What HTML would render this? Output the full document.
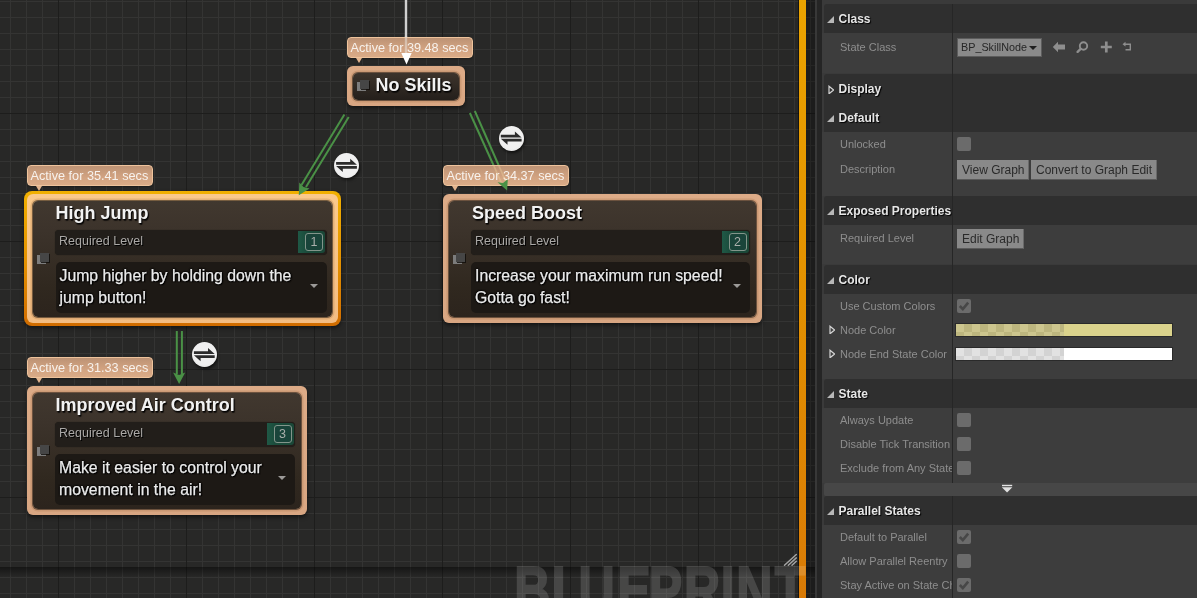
<!DOCTYPE html>
<html><head><meta charset="utf-8">
<style>
*{margin:0;padding:0;box-sizing:border-box}
html,body{width:1197px;height:598px;overflow:hidden;background:#3a3a3a;font-family:"Liberation Sans",sans-serif}
#graph{will-change:transform;position:absolute;left:0;top:0;width:815px;height:598px;background-color:#282827;
background-image:
linear-gradient(to right,#1d1d1c 0,#1d1d1c 1px,transparent 1px),
linear-gradient(to bottom,#1d1d1c 0,#1d1d1c 1px,transparent 1px),
linear-gradient(to right,#343433 0,#343433 1px,transparent 1px),
linear-gradient(to bottom,#343433 0,#343433 1px,transparent 1px);
background-size:128px 128px,128px 128px,16px 16px,16px 16px;
background-position:58px 0,0 113px,10px 0,0 1px;overflow:hidden}
.abs{position:absolute}
.bub{position:absolute;height:21px;border-radius:4px;background:linear-gradient(#bd9375,#d2a381 60%,#daab87);border:1px solid #eec39c;color:#f7f2ed;font-size:12.7px;line-height:20px;padding-left:2.5px;white-space:nowrap;box-shadow:0 1px 2px rgba(0,0,0,.35)}
.bub:after{content:"";position:absolute;left:7.5px;top:20px;border-left:3px solid transparent;border-right:3px solid transparent;border-top:5px solid #e2b48e}
.node{position:absolute;background:linear-gradient(#ddab87,#d8a682);border-radius:6px;box-shadow:0 2px 4px rgba(0,0,0,.55)}
.node .in{position:absolute;left:6px;top:6.5px;right:6px;bottom:6.5px;border-radius:5px;background:linear-gradient(#41382f 0,#3c332b 30px,#30281f 75%,#2c241d 100%);box-shadow:0 0 0 1px rgba(30,24,18,.55),0 0 0 2.5px rgba(150,100,60,.22)}
.title{position:absolute;color:#f2f2f2;font-weight:bold;font-size:18px;white-space:nowrap;text-shadow:1px 1px 1px rgba(0,0,0,.9),1px 2px 1px rgba(0,0,0,.6)}
.req{position:absolute;height:25px;border-radius:4px;background:#221e1a;box-shadow:0 0 1px rgba(0,0,0,.6)}
.req span{position:absolute;left:4px;top:4px;font-size:12.5px;color:#aaa8a6;text-shadow:1px 1px 0 #000}
.badge{position:absolute;right:1.5px;top:1.5px;width:27px;height:22px;background:linear-gradient(to right,#1f5946,#1b4c3c 30%,#1a4737);border-radius:0 3px 3px 0}
.badge i{position:absolute;left:7px;top:2px;width:18px;height:18px;border:1px solid #83958b;border-radius:3px;font-style:normal;color:#a9aeab;font-size:12.5px;text-align:center;line-height:16px;background:#19443a}
.desc{position:absolute;height:50.5px;border-radius:5px;background:#1d1915}
.desc p{position:absolute;left:4px;top:3.3px;color:#ececec;-webkit-text-stroke:0.25px #e8e8e8;font-size:15.8px;line-height:21.8px;text-shadow:0 0 2px #000,0 0 2px #000,0 0 1.5px #000,0 0 1px #000,1px 1px 1px #000}
.dd{position:absolute;width:0;height:0;border-left:4.5px solid transparent;border-right:4.5px solid transparent;border-top:4.5px solid #9c9a98}
.ico{position:absolute;width:13px;height:12px}
.ico:before{content:"";position:absolute;left:0;top:2px;width:9px;height:9px;background:#7c7c7c}
.ico:after{content:"";position:absolute;left:3px;top:0;width:9px;height:9px;background:#464646;box-shadow:1px 1px 0 rgba(15,12,10,.8)}
.tcirc{position:absolute;width:25px;height:25px;border-radius:50%;background:radial-gradient(circle at 50% 45%,#f0f0f0 60%,#dcdcdc 100%);box-shadow:1px 2px 3px rgba(0,0,0,.6)}
#panel{will-change:transform;position:absolute;left:815px;top:0;width:382px;height:598px;background:#3a3a3a}
#panel .strip1{position:absolute;left:0;top:0;width:2px;height:598px;background:#383838}
#panel .strip2{position:absolute;left:2px;top:0;width:5px;height:598px;background:#252525}
.hdr{position:absolute;left:9px;width:373px;background:#2f2f2f;border-radius:3px 0 0 3px}
.hdr b{position:absolute;left:14.5px;margin-top:1px;font-size:12px;color:#e6e6e6;text-shadow:1px 1px 1px #000;white-space:nowrap}
.tri{position:absolute;left:3px;width:0;height:0;border-left:7px solid transparent;border-bottom:7px solid #b8b8b8;margin-top:0}
.trc{position:absolute;left:4px;width:6px;height:9px}
.rows{position:absolute;left:7px;width:375px;background:#3d3d3d}
.lbl{position:absolute;left:25px;font-size:11px;color:#8e8e8e;white-space:nowrap;overflow:hidden}
.div{position:absolute;left:137px;width:1px;background:#262626}
.cb{position:absolute;left:142px;width:14px;height:14px;border-radius:2px;background:#6b6b6b}
.btn{position:absolute;height:20px;background:#898989;border-bottom:1px solid #5a5a5a;border-right:1px solid #6a6a6a;color:#2a2a2a;font-size:12px;line-height:21px;padding-left:5px;white-space:nowrap}

</style></head><body>
<div id="graph">
  <!-- shadow band -->
  <div class="abs" style="left:0;top:567px;width:815px;height:10px;background:linear-gradient(rgba(0,0,0,.45),rgba(0,0,0,0))"></div>

  <!-- connection lines -->
  <svg class="abs" style="left:0;top:0" width="815" height="598">
    <line x1="406" y1="0" x2="406" y2="56" stroke="#cfcfcf" stroke-width="2.4"/>
    <g stroke="#4a9146" stroke-width="2" stroke-linecap="butt">
      <line x1="344.4" y1="114.4" x2="301.5" y2="185"/>
      <line x1="348.7" y1="117.1" x2="306" y2="187"/>
      <line x1="469.9" y1="113" x2="502" y2="184"/>
      <line x1="474.8" y1="111" x2="506" y2="182"/>
      <line x1="176.8" y1="331" x2="176.8" y2="374"/>
      <line x1="181.9" y1="331" x2="181.9" y2="374"/>
    </g>
  </svg>

  <!-- No Skills -->
  <div class="node" style="left:347px;top:66px;width:118px;height:40px;">
    <div class="in" style="bottom:6px;background:linear-gradient(#3d342c,#241f1b)"></div>
    <div class="ico" style="left:10px;top:14px"></div>
    <div class="title" style="left:28.5px;top:8.5px;font-size:18px">No Skills</div>
  </div>
  <div class="bub" style="left:347px;top:37px;width:126px">Active for 39.48 secs</div>

  <!-- High Jump (selected) -->
  <div class="abs" style="left:24px;top:191px;width:317px;height:135px;border-radius:8px;background:linear-gradient(#f1b000,#e39000 55%,#d06c00);box-shadow:0 2px 4px rgba(0,0,0,.5)"></div>
  <div class="node" style="left:27px;top:194px;width:311px;height:129px;background:linear-gradient(#fbc98b,#f3bd83);box-shadow:none">
    <div class="in"></div>
    <div class="ico" style="left:10px;top:59px"></div>
    <div class="title" style="left:28.5px;top:9px">High Jump</div>
    <div class="req" style="left:28px;top:35.7px;width:271.5px"><span>Required Level</span><div class="badge"><i>1</i></div></div>
    <div class="desc" style="left:28.5px;top:68px;width:271px"><p>Jump higher by holding down the<br>jump button!</p><div class="dd" style="left:254px;top:22px"></div></div>
  </div>
  <div class="bub" style="left:27px;top:165px;width:126px">Active for 35.41 secs</div>

  <!-- Speed Boost -->
  <div class="node" style="left:443px;top:194px;width:319px;height:129px">
    <div class="in"></div>
    <div class="ico" style="left:10px;top:59px"></div>
    <div class="title" style="left:29px;top:9px">Speed Boost</div>
    <div class="req" style="left:28px;top:35.7px;width:279px"><span>Required Level</span><div class="badge"><i>2</i></div></div>
    <div class="desc" style="left:28px;top:68px;width:279px"><p>Increase your maximum run speed!<br>Gotta go fast!</p><div class="dd" style="left:262px;top:22px"></div></div>
  </div>
  <div class="bub" style="left:443px;top:165px;width:126px">Active for 34.37 secs</div>

  <!-- Improved Air Control -->
  <div class="node" style="left:27px;top:386px;width:280px;height:129px">
    <div class="in"></div>
    <div class="ico" style="left:10px;top:59px"></div>
    <div class="title" style="left:28.5px;top:9px">Improved Air Control</div>
    <div class="req" style="left:28px;top:35.7px;width:240px"><span>Required Level</span><div class="badge"><i>3</i></div></div>
    <div class="desc" style="left:28px;top:68px;width:240px"><p>Make it easier to control your<br>movement in the air!</p><div class="dd" style="left:223px;top:22px"></div></div>
  </div>
  <div class="bub" style="left:27px;top:357px;width:126px">Active for 31.33 secs</div>

  <!-- arrowheads & transition icons -->
  <svg class="abs" style="left:0;top:0" width="815" height="598">
    <line x1="406" y1="36" x2="406" y2="56" stroke="#e8e0d8" stroke-width="2.4" stroke-opacity=".55"/>
    <g stroke="#f0d8a0" stroke-width="1.8" stroke-opacity=".35"><line x1="493.9" y1="166" x2="501.5" y2="183"/><line x1="499" y1="166" x2="505.5" y2="181"/></g>
    <polygon points="401.3,53 411.7,53 406.5,64.5" fill="#ffffff"/>
    <g fill="#4a9146">
      <polygon points="299.3,182.5 303.5,187 309.6,188.6 298.8,195.3"/>
      <polygon points="497.5,182.3 503,183 507.8,179.3 507.1,190.6"/>
      <polygon points="173.1,372.6 179.1,375 185.2,372.6 179.1,383.9"/>
    </g>
  </svg>
  <div class="tcirc" style="left:334.2px;top:152.9px"></div>
  <div class="tcirc" style="left:498.9px;top:125.6px"></div>
  <div class="tcirc" style="left:191.9px;top:342.1px"></div>
  <svg class="abs" style="left:0;top:0" width="815" height="598">
    <g fill="#2b2b2b" transform="translate(346.6,165.4)"><polygon points="10.3,-0.6 -10.5,-0.6 -10.5,-3.4 3.6,-3.4 3.6,-6.6"/><polygon points="-10.5,0.6 10.3,0.6 10.3,3.4 -3.8,3.4 -3.8,6.6"/></g>
    <g fill="#2b2b2b" transform="translate(511.3,138.1)"><polygon points="10.3,-0.6 -10.5,-0.6 -10.5,-3.4 3.6,-3.4 3.6,-6.6"/><polygon points="-10.5,0.6 10.3,0.6 10.3,3.4 -3.8,3.4 -3.8,6.6"/></g>
    <g fill="#2b2b2b" transform="translate(204.4,354.6)"><polygon points="10.3,-0.6 -10.5,-0.6 -10.5,-3.4 3.6,-3.4 3.6,-6.6"/><polygon points="-10.5,0.6 10.3,0.6 10.3,3.4 -3.8,3.4 -3.8,6.6"/></g>
    
  </svg>
  <div class="abs" style="left:806px;top:0;width:9px;height:598px;background:rgba(0,0,0,.28)"></div>
  <div class="abs" style="left:798px;top:0;width:1px;height:598px;background:rgba(0,0,0,.5)"></div>
  <div class="abs" style="left:799px;top:0;width:7px;height:598px;background:linear-gradient(#eaa300,#e29000 50%,#d87a06)"></div>
  <svg class="abs" style="left:0;top:0" width="815" height="598">
    <g stroke="#a4a4a4" stroke-width="1.5" stroke-linecap="round">
      <line x1="784.5" y1="565.3" x2="796.3" y2="554.5"/>
      <line x1="788.3" y1="565.3" x2="796.3" y2="557.9"/>
      <line x1="792" y1="565.3" x2="796.3" y2="561.3"/>
    </g>
    <g opacity="0.14" fill="#fff" stroke="#fff" stroke-width="2" font-family="Liberation Sans" font-weight="bold" font-size="66"><g transform="translate(0,613.2) scale(0.76,1)"><text x="676.8" y="0">B</text><text x="726.0" y="0">L</text><text x="761.2" y="0">U</text><text x="812.2" y="0">E</text><text x="853.5" y="0">P</text><text x="900.0" y="0">R</text><text x="948.5" y="0">I</text><text x="968.7" y="0">N</text><text x="1019.5" y="0">T</text></g></g>
  </svg>
</div>
<div id="panel">
 <div class="strip1"></div><div class="strip2"></div>
 <!-- Class -->
 <div class="hdr" style="top:4px;height:29px;border-radius:3px 0 0 0"><i class="tri" style="top:12px"></i><b style="top:7px">Class</b></div>
 <div class="rows" style="top:33px;height:40px"></div>
 <div class="lbl" style="top:41px">State Class</div>
 <div class="combo" style="position:absolute;left:142px;top:38px;width:85px;height:19px;background:#8a8a8a;border:1px solid #5c5c5c;color:#262626;font-size:10.8px;line-height:17px;padding-left:3px">BP_SkillNode<i style="position:absolute;right:4px;top:6.5px;border-left:4.5px solid transparent;border-right:4.5px solid transparent;border-top:4.5px solid #1e1e1e"></i></div>
 <svg style="position:absolute;left:237px;top:41px" width="80" height="12">
  <path d="M0.8,6 L6,0.8 L6,3.6 L13,3.6 L13,8.4 L6,8.4 L6,11.2 Z" fill="#8e8e8e"/>
  <circle cx="31.5" cy="5" r="3.7" fill="none" stroke="#8e8e8e" stroke-width="1.9"/>
  <line x1="28.6" y1="7.9" x2="25.6" y2="10.9" stroke="#8e8e8e" stroke-width="2.3" stroke-linecap="round"/>
  <path d="M54.3,0.5 V11.5 M48.8,6 H59.8" stroke="#8e8e8e" stroke-width="2.7"/>
  <path d="M73,3.2 H78.3 V8.7 H73.5" fill="none" stroke="#8e8e8e" stroke-width="1.4"/>
  <path d="M70.5,3.2 L73.5,0.8 L73.5,5.6 Z" fill="#8e8e8e"/>
 </svg>
 <!-- Display -->
 <div class="hdr" style="top:74px;height:29px;border-radius:3px 0 0 0"><svg class="trc" style="top:11px" width="7" height="10"><path d="M1,1.2 L5.6,5 L1,8.8 Z" fill="none" stroke="#d4d4d4" stroke-width="1.2"/></svg><b style="top:6.5px">Display</b></div>
 <!-- Default -->
 <div class="hdr" style="top:103px;height:29px;border-radius:0"><i class="tri" style="top:12px"></i><b style="top:7px">Default</b></div>
 <div class="rows" style="top:132px;height:64px"></div>
 <div class="lbl" style="top:138px">Unlocked</div>
 <div class="cb" style="top:137px"></div>
 <div class="lbl" style="top:163px">Description</div>
 <div class="btn" style="left:142px;top:160px;width:72px">View Graph</div>
 <div class="btn" style="left:216px;top:160px;width:126px">Convert to Graph Edit</div>
 <!-- Exposed -->
 <div class="hdr" style="top:196px;height:28.5px;border-radius:3px 0 0 0"><i class="tri" style="top:12px"></i><b style="top:7px">Exposed Properties</b></div>
 <div class="rows" style="top:224.5px;height:39px"></div>
 <div class="lbl" style="top:232px">Required Level</div>
 <div class="btn" style="left:142px;top:229px;width:67px">Edit Graph</div>
 <!-- Color -->
 <div class="hdr" style="top:265px;height:29px;border-radius:3px 0 0 0"><i class="tri" style="top:12px"></i><b style="top:7px">Color</b></div>
 <div class="rows" style="top:294px;height:84.5px"></div>
 <div class="lbl" style="top:300px">Use Custom Colors</div>
 <div class="cb" style="top:299px"><svg width="14" height="14" style="position:absolute;left:0;top:0"><path d="M2.8,7 L5.8,10 L11.2,3.6" fill="none" stroke="#474747" stroke-width="2.6"/></svg></div>
 <svg class="trc" style="position:absolute;left:14px;top:325px" width="7" height="10"><path d="M1,1.2 L5.6,5 L1,8.8 Z" fill="none" stroke="#d4d4d4" stroke-width="1.2"/></svg>
 <div class="lbl" style="top:324px">Node Color</div>
 <div class="cbar" style="position:absolute;left:140px;top:323px;width:218px;height:14px;background:#2a2a2a"></div>
 <div style="position:absolute;left:141px;top:324px;width:216px;height:12px;background:#dbd38c"></div>
 <div style="position:absolute;left:141px;top:324px;width:108px;height:12px;background:repeating-conic-gradient(#bdb67e 0 25%,#cdc68e 0 50%) 0 0/16px 16px"></div>
 <svg class="trc" style="position:absolute;left:14px;top:349px" width="7" height="10"><path d="M1,1.2 L5.6,5 L1,8.8 Z" fill="none" stroke="#d4d4d4" stroke-width="1.2"/></svg>
 <div class="lbl" style="top:348px">Node End State Color</div>
 <div style="position:absolute;left:140px;top:347px;width:218px;height:14px;background:#2a2a2a"></div>
 <div style="position:absolute;left:141px;top:348px;width:216px;height:12px;background:#ffffff"></div>
 <div style="position:absolute;left:141px;top:348px;width:108px;height:12px;background:repeating-conic-gradient(#d3d3d3 0 25%,#e2e2e2 0 50%) 0 0/16px 16px"></div>
 <!-- State -->
 <div class="hdr" style="top:378.5px;height:29.5px;border-radius:3px 0 0 0"><i class="tri" style="top:12px"></i><b style="top:7px">State</b></div>
 <div class="rows" style="top:408px;height:74.5px"></div>
 <div class="lbl" style="top:414px;width:112px">Always Update</div>
 <div class="cb" style="top:413px"></div>
 <div class="lbl" style="top:438px;width:112px">Disable Tick Transition</div>
 <div class="cb" style="top:437px"></div>
 <div class="lbl" style="top:462px;width:112px">Exclude from Any State</div>
 <div class="cb" style="top:461px"></div>
 <div class="div" style="top:4px;height:478.5px"></div>
 <!-- expander -->
 <div style="position:absolute;left:9px;top:482.5px;width:373px;height:13px;background:#474747;border-radius:2px 0 0 2px"></div>
 <svg style="position:absolute;left:186px;top:484px" width="14" height="10"><rect x="1" y="0.8" width="10.2" height="1.4" fill="#e4e4e4"/><path d="M0.8,3.3 H11.4 L6.1,8.5 Z" fill="#e0e0e0"/></svg>
 <!-- Parallel -->
 <div class="hdr" style="top:495.5px;height:29px;border-radius:3px 0 0 0"><i class="tri" style="top:12px"></i><b style="top:7px">Parallel States</b></div>
 <div class="rows" style="top:524.5px;height:74px"></div>
 <div class="lbl" style="top:531px;width:112px">Default to Parallel</div>
 <div class="cb" style="top:530px"><svg width="14" height="14" style="position:absolute;left:0;top:0"><path d="M2.8,7 L5.8,10 L11.2,3.6" fill="none" stroke="#474747" stroke-width="2.6"/></svg></div>
 <div class="lbl" style="top:555px;width:112px">Allow Parallel Reentry</div>
 <div class="cb" style="top:554px"></div>
 <div class="lbl" style="top:579px;width:112px">Stay Active on State Change</div>
 <div class="div" style="top:495.5px;height:103px"></div>
 <div class="cb" style="top:578px"><svg width="14" height="14" style="position:absolute;left:0;top:0"><path d="M2.8,7 L5.8,10 L11.2,3.6" fill="none" stroke="#474747" stroke-width="2.6"/></svg></div>
</div>
</body></html>
